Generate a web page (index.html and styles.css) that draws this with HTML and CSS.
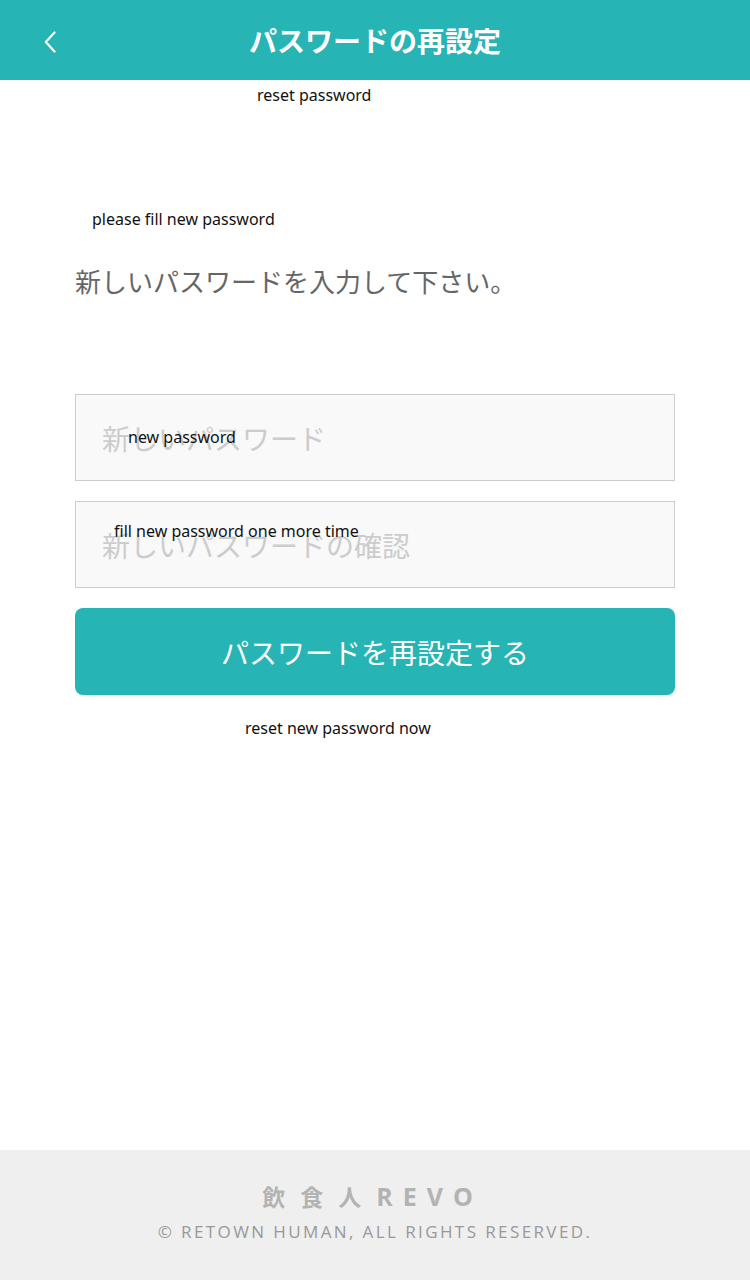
FILE: index.html
```html
<!DOCTYPE html>
<html lang="ja">
<head>
<meta charset="utf-8">
<title>パスワードの再設定</title>
<link rel="stylesheet" href="styles.css">
</head>
<body>
<div class="page">
  <header class="topbar">
    <a class="back" aria-label="戻る">
      <svg width="12" height="22" viewBox="0 0 12 22"><path d="M10.5 1.5 L1.8 11 L10.5 20.5" fill="none" stroke="#fff" stroke-width="2.2" stroke-linecap="round" stroke-linejoin="round"/></svg>
    </a>
    <h1 class="title">パスワードの再設定</h1>
    <span></span>
  </header>

  <main class="content">
    <p class="lead">新しいパスワードを入力して下さい。</p>
    <form class="form">
      <div class="field"><span class="ph">新しいパスワード</span></div>
      <div class="field field2"><span class="ph">新しいパスワードの確認</span></div>
      <button type="button" class="submit">パスワードを再設定する</button>
    </form>
  </main>

  <footer class="footer">
    <div class="brand"><span class="brand-jp">飲食人</span><span class="brand-en">REVO</span></div>
    <div class="copy">© RETOWN HUMAN, ALL RIGHTS RESERVED.</div>
  </footer>

  <span class="note n1">reset password</span>
  <span class="note n2">please fill new password</span>
  <span class="note n3">new password</span>
  <span class="note n4">fill new password one more time</span>
  <span class="note n5">reset new password now</span>
</div>
</body>
</html>
```
FILE: styles.css
```css
* { box-sizing: border-box; }
html, body { margin: 0; padding: 0; background: #fff; }
body { font-family: "Noto Sans CJK JP", "Noto Sans", sans-serif; }
.page {
  position: relative;
  width: 750px;
  min-height: 1280px;
  display: flex;
  flex-direction: column;
}
.topbar {
  height: 80px;
  background: #26b4b4;
  display: grid;
  grid-template-columns: 1fr auto 1fr;
  align-items: center;
}
.back { padding-left: 44px; padding-top: 3px; display: flex; align-items: center; }
.title {
  margin: 0;
  color: #fff;
  font-size: 28px;
  font-weight: 700;
  line-height: 1;
}
.content { padding: 0 75px; flex: 1; }
.lead {
  margin: 183px 0 0;
  font-size: 26px;
  line-height: 36px;
  color: #666;
}
.form { margin-top: 95px; display: flex; flex-direction: column; gap: 20px; }
.field {
  height: 87px;
  border: 1px solid #cccccc;
  background: #f9f9f9;
  display: flex;
  align-items: center;
  padding-left: 26px;
}
.field2 { padding-top: 1px; }
.ph { font-size: 28px; color: #cccccc; line-height: 1; }
.submit {
  height: 87px;
  border: 0;
  border-radius: 8px;
  background: #26b4b4;
  color: #fff;
  font-family: "Noto Sans CJK JP", sans-serif;
  font-size: 28px;
  padding: 0;
}
.footer {
  height: 130px;
  background: #efefef;
  display: flex;
  flex-direction: column;
  align-items: center;
  padding-top: 30px;
  font-family: "Open Sans", "Noto Sans CJK JP", sans-serif;
}
.brand {
  display: flex;
  align-items: baseline;
  font-weight: 700;
  color: #b3b3b3;
  line-height: 32px;
  margin-right: 5px;
}
.brand-jp {
  font-family: "Noto Sans CJK JP", sans-serif;
  font-size: 23px;
  letter-spacing: 15px;
}
.brand-en { font-size: 25px; letter-spacing: 10px; }
.copy {
  margin-top: 7px;
  font-size: 17px;
  color: #999;
  letter-spacing: 2.4px;
  line-height: 26px;
}
.note {
  position: absolute;
  font-family: "Noto Sans", "Open Sans", sans-serif;
  font-size: 16px;
  line-height: 20px;
  color: #111;
  white-space: nowrap;
}
.n1 { left: 257px; top: 85px; }
.n2 { left: 92px; top: 209px; }
.n3 { left: 128px; top: 427px; }
.n4 { left: 114px; top: 521px; }
.n5 { left: 245px; top: 718px; }
```
